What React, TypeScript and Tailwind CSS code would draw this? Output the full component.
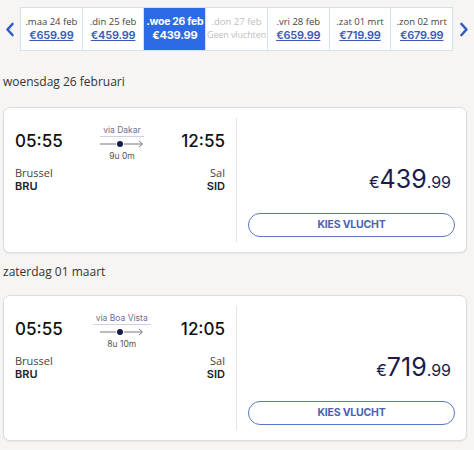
import React from 'react'

interface DayCell {
  label: string
  price?: string
  selected?: boolean
}

const DAYS: DayCell[] = [
  { label: '.maa 24 feb', price: '€659.99' },
  { label: '.din 25 feb', price: '€459.99' },
  { label: '.woe 26 feb', price: '€439.99', selected: true },
  { label: '.don 27 feb' },
  { label: '.vri 28 feb', price: '€659.99' },
  { label: '.zat 01 mrt', price: '€719.99' },
  { label: '.zon 02 mrt', price: '€679.99' },
]

interface Flight {
  dep: string
  arr: string
  via: string
  duration: string
  price: string
}

const Chevron = ({ dir }: { dir: 'left' | 'right' }) => (
  <svg width="10" height="15" viewBox="0 0 10 15" fill="none">
    <path
      d={dir === 'left' ? 'M7.5 2 L2.5 7.5 L7.5 13' : 'M2.5 2 L7.5 7.5 L2.5 13'}
      stroke="#2f5dc2"
      strokeWidth="2.6"
      strokeLinecap="round"
      strokeLinejoin="round"
    />
  </svg>
)

const RouteArrow = () => (
  <svg width="46" height="12" viewBox="0 0 46 12" fill="none">
    <line x1="1" y1="6" x2="17" y2="6" stroke="#777" strokeWidth="1" />
    <circle cx="21" cy="6" r="3" fill="#141a4a" />
    <line x1="25" y1="6" x2="43" y2="6" stroke="#777" strokeWidth="1" />
    <path d="M40 3 L43.5 6 L40 9" stroke="#777" strokeWidth="1" fill="none" />
  </svg>
)

function FlightCard({ flight }: { flight: Flight }) {
  const [whole, cents] = flight.price.split('.')
  return (
    <div className="mx-[3px] w-[464px] h-[146px] bg-white border border-[#dcdcdc] rounded-[7px] shadow-[0_1px_2px_rgba(0,0,0,0.06)] flex font-['Inter',sans-serif]">
      {/* left: times and route */}
      <div className="w-[232px] pt-[17px] px-[11px]">
        <div className="flex justify-between items-start">
          <div className="mt-[4px] text-[17px] leading-[24px] font-medium text-[#111]">{flight.dep}</div>
          <div className="flex flex-col items-center">
            <div className="text-[8.5px] leading-[11px] text-[#6a6e9a] border-b border-[#cfd1de] px-[3px]">{flight.via}</div>
            <div className="mt-[1px]">
              <RouteArrow />
            </div>
            <div className="text-[8.5px] leading-[12px] text-[#555]">{flight.duration}</div>
          </div>
          <div className="mt-[4px] text-[17px] leading-[24px] font-medium text-[#111]">{flight.arr}</div>
        </div>
        <div className="mt-[4px] flex justify-between text-[11px] leading-[13px]">
          <div>
            <div className="text-[#444] font-['Open_Sans',sans-serif]">Brussel</div>
            <div className="mt-[1px] font-semibold text-[#222]">BRU</div>
          </div>
          <div className="text-right">
            <div className="text-[#444] font-['Open_Sans',sans-serif]">Sal</div>
            <div className="mt-[1px] font-semibold text-[#222]">SID</div>
          </div>
        </div>
      </div>
      {/* right: price and button */}
      <div className="flex-1 my-[10px] border-l border-[#e2e2e2] flex flex-col justify-end pb-[5px]">
        <div className="pr-[15px] text-right text-[#1b1b4b] leading-[28px]">
          <span className="text-[16px]">€</span>
          <span className="text-[25px]">{whole}</span>
          <span className="text-[16px]">.{cents}</span>
        </div>
        <div className="mt-[14px] px-[11px]">
          <button className="w-full h-[24px] rounded-full border-[1.5px] border-[#5b76c2] text-[#4a63b0] text-[10.5px] font-bold tracking-[-0.2px]">
            KIES VLUCHT
          </button>
        </div>
      </div>
    </div>
  )
}

export default function App() {
  return (
    <div className="w-[474px] h-[450px] bg-[#f6f5f4] overflow-hidden font-['Open_Sans',sans-serif]">
      {/* date strip */}
      <div className="pt-[7px] flex items-center">
        <div className="w-[20px] flex justify-center">
          <Chevron dir="left" />
        </div>
        <div className="w-[433px] h-[44px] bg-white border border-[#d2e3ea] flex">
          {DAYS.map((d, i) => (
            <div
              key={d.label}
              className={`flex-1 min-w-0 overflow-hidden whitespace-nowrap flex flex-col items-center justify-center ${i < DAYS.length - 1 ? 'border-r border-[#d2e3ea]' : ''} ${d.selected ? 'bg-[#2d6be4]' : ''}`}
            >
              <div
                className={`leading-[12px] ${d.selected ? 'text-[10.5px] text-white font-bold font-["Inter",sans-serif] tracking-[-0.3px]' : d.price ? 'text-[9.5px] text-[#444]' : 'text-[9.5px] text-[#bdbdbd]'}`}
              >
                {d.label}
              </div>
              {d.price ? (
                <div
                  className={`text-[11px] leading-[14px] font-['Inter',sans-serif] tracking-[-0.2px] ${d.selected ? 'text-white font-bold' : 'text-[#3b5bb4] font-semibold underline'}`}
                >
                  {d.price}
                </div>
              ) : (
                <div className="text-[9px] leading-[14px] text-[#c0c0c0] tracking-[-0.1px]">Geen vluchten</div>
              )}
            </div>
          ))}
        </div>
        <div className="w-[21px] flex justify-center">
          <Chevron dir="right" />
        </div>
      </div>

      <div className="mt-[22px] px-[3px] text-[12px] leading-[18px] text-[#333]">woensdag 26 februari</div>
      <div className="mt-[16px]">
        <FlightCard flight={{ dep: '05:55', arr: '12:55', via: 'via Dakar', duration: '9u 0m', price: '439.99' }} />
      </div>

      <div className="mt-[10px] px-[3px] text-[12px] leading-[18px] text-[#333]">zaterdag 01 maart</div>
      <div className="mt-[14px]">
        <FlightCard flight={{ dep: '05:55', arr: '12:05', via: 'via Boa Vista', duration: '8u 10m', price: '719.99' }} />
      </div>
    </div>
  )
}
